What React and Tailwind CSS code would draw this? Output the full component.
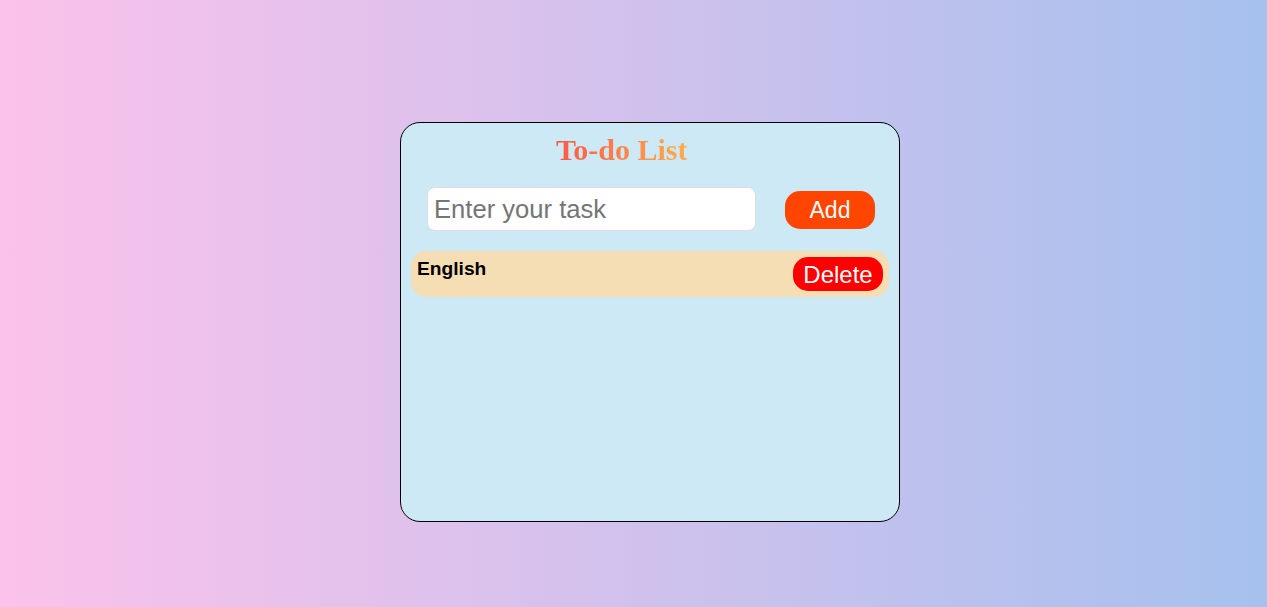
import { useState } from "react";

export default function App() {
  const [task, setTask] = useState("");
  const [tasks, setTasks] = useState(["English"]);

  const addTask = () => {
    if (!task.trim()) return;
    setTasks([...tasks, task.trim()]);
    setTask("");
  };

  const deleteTask = (i) => {
    setTasks(tasks.filter((_, idx) => idx !== i));
  };

  return (
    <div className="w-full h-[607px] bg-[linear-gradient(to_right,#fbc2eb,#a6c1ee)] flex justify-center pl-[33px] pt-[122px] font-['Liberation_Sans',Arial,sans-serif]">
      <div className="w-[500px] h-[400px] bg-[#cde9f6] border border-black rounded-[20px]">

        {/* TITLE */}
        <div className="pt-[10px] pl-[155px] h-[64px]">
          <span className="inline-block bg-[linear-gradient(to_right,#ff5848,#ffad4c)] bg-clip-text text-transparent font-['Liberation_Serif','Times_New_Roman',serif] font-bold text-[30px] leading-[34px]">
            To-do List
          </span>
        </div>

        {/* INPUT */}
        <div className="flex items-center pl-[26px]">
          <input
            value={task}
            onChange={(e) => setTask(e.target.value)}
            placeholder="Enter your task"
            className="w-[329px] h-[44px] bg-white border border-[#dedede] rounded-[8px] px-[6px] text-[25.6px] outline-none placeholder:text-[#757575]"
          />
          <button
            onClick={addTask}
            className="ml-[29px] mt-[2px] w-[90px] h-[38px] bg-[#ff4500] text-white text-[23px] rounded-[15px]"
          >
            Add
          </button>
        </div>

        {/* LIST */}
        <div className="mt-[20px] px-[10px] space-y-2">
          {tasks.map((t, i) => (
            <div key={i} className="flex justify-between items-start bg-[#f5deb3] rounded-[15px] pt-[6px] pb-[6px] px-[6px]">
              <p className="font-bold text-[19.2px] leading-[22px] mt-[1px] text-black">{t}</p>
              <button
                onClick={() => deleteTask(i)}
                className="w-[90px] h-[34px] bg-[#ff0000] text-white text-[24px] leading-[27px] rounded-[15px]"
              >
                Delete
              </button>
            </div>
          ))}
        </div>

      </div>
    </div>
  );
}
